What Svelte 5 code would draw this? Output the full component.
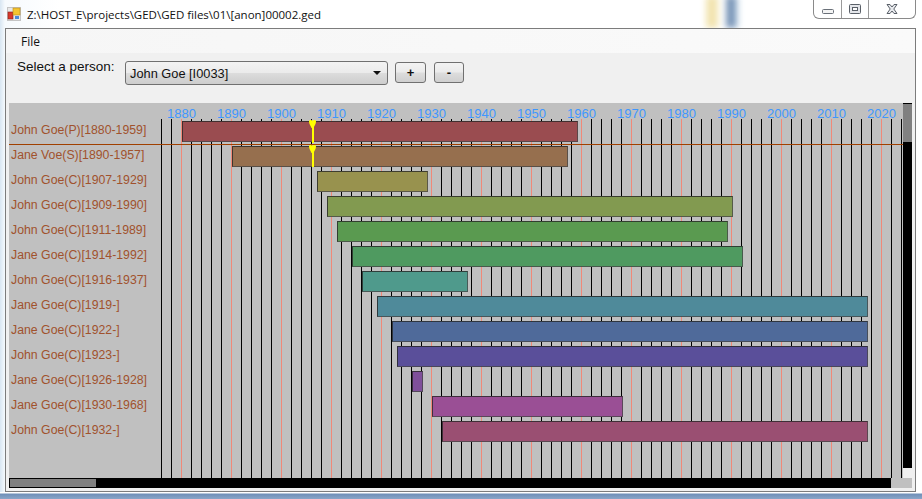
<script lang="ts">
	const people = [
		{ name: 'John Goe(P)', from: 1880, to: 1959, color: '#9a4c50' },
		{ name: 'Jane Voe(S)', from: 1890, to: 1957, color: '#966f4e' },
		{ name: 'John Goe(C)', from: 1907, to: 1929, color: '#98924e' },
		{ name: 'John Goe(C)', from: 1909, to: 1990, color: '#829a50' },
		{ name: 'John Goe(C)', from: 1911, to: 1989, color: '#5a9a50' },
		{ name: 'Jane Goe(C)', from: 1914, to: 1992, color: '#4f9a60' },
		{ name: 'John Goe(C)', from: 1916, to: 1937, color: '#4f9a8c' },
		{ name: 'Jane Goe(C)', from: 1919, to: null, color: '#4f8a9a' },
		{ name: 'Jane Goe(C)', from: 1922, to: null, color: '#4f6a9a' },
		{ name: 'John Goe(C)', from: 1923, to: null, color: '#5a4f9a' },
		{ name: 'Jane Goe(C)', from: 1926, to: 1928, color: '#7f4f9a' },
		{ name: 'Jane Goe(C)', from: 1930, to: 1968, color: '#9a4f95' },
		{ name: 'John Goe(C)', from: 1932, to: null, color: '#9a4f72' }
	];

	/** Scale of the chart: 5px per year, bars are measured from the label column */
	const barLeft = (year: number) => 21 + (year - 1880) * 5;
	const barWidth = (from: number, to: number | null) => ((to ?? 2017) - from) * 5 + 1;

	const ticks = Array.from({ length: 75 }, (_, i) => 1876 + i * 2);
	const decades = ticks.filter((y) => y % 10 === 0);
	const tickX = (year: number) => 152 + (year - 1876) * 5;
</script>

<div class="window">
	<div class="glass"></div>
	<header class="titlebar">
		<svg class="app-icon" width="14" height="14" viewBox="0 0 14 14">
			<rect x="0.5" y="0.5" width="13" height="13" fill="#e8e8e8" stroke="#c4c4c4" />
			<rect x="1" y="5" width="5" height="7" fill="#d8382c" stroke="#8c2018" stroke-width="0.6" />
			<rect x="6" y="1" width="7" height="7" fill="#f4c430" stroke="#b88a18" stroke-width="0.6" />
			<rect x="8" y="9" width="4" height="3" fill="#4a8ad8" />
		</svg>
		<span class="title">Z:\HOST_E\projects\GED\GED files\01\[anon]00002.ged</span>
		<div class="controls">
			<div class="ctl min">
				<svg width="12" height="5" viewBox="0 0 12 5"><rect x="0.5" y="0.5" width="11" height="4" rx="1" fill="#f4f4f4" stroke="#6a7078" /></svg>
			</div>
			<div class="ctl max">
				<svg width="12" height="10" viewBox="0 0 12 10"><rect x="0.5" y="0.5" width="11" height="9" rx="1" fill="#e4e6ea" stroke="#5a6068" /><rect x="3.5" y="3.5" width="5" height="3" fill="#fff" stroke="#5a6068" /></svg>
			</div>
			<div class="ctl close">
				<svg width="12" height="10" viewBox="0 0 12 10"><path d="M1 0.5H4L6 3L8 0.5H11L7.8 5L11 9.5H8L6 7L4 9.5H1L4.2 5Z" fill="#e8eaee" stroke="#5a6068" /></svg>
			</div>
		</div>
	</header>

	<main class="client">
		<nav class="menu"><span>File</span></nav>

		<div class="toolbar">
			<span class="prompt">Select a person:</span>
			<div class="combo">
				<span>John Goe [I0033]</span>
				<i class="arrow"></i>
			</div>
			<button class="btn plus">+</button>
			<button class="btn minus">-</button>
		</div>

		<div class="chart-wrap">
			<div class="chart">
				{#each ticks as year}
					<div class="tick" class:decade={year % 10 === 0} style="left: {tickX(year)}px"></div>
				{/each}
				{#each decades as year}
					<span class="year" style="left: {tickX(year) - 20}px">{year}</span>
				{/each}

				<div class="rows">
					{#each people as p}
						<div class="row">
							<span class="label">{p.name}[{p.from}-{p.to ?? ''}]</span>
							<div
								class="bar"
								style="margin-left: {barLeft(p.from)}px; width: {barWidth(p.from, p.to)}px; background: {p.color}"
							></div>
						</div>
					{/each}
				</div>

				<div class="cursor"></div>
				<div class="marker first">
					<svg width="7" height="8" viewBox="0 0 7 8"><path d="M0 1.500C0 0 2.500 -0.300 3.500 0.700C4.500 -0.300 7 0 7 1.500C7 4 5.500 5.500 4.500 8H2.500C1.500 5.500 0 4 0 1.500Z" fill="#ffff00" /></svg>
				</div>
				<div class="marker second">
					<svg width="7" height="8" viewBox="0 0 7 8"><path d="M0 1.500C0 0 2.500 -0.300 3.500 0.700C4.500 -0.300 7 0 7 1.500C7 4 5.500 5.500 4.500 8H2.500C1.500 5.500 0 4 0 1.500Z" fill="#ffff00" /></svg>
				</div>
			</div>
			<div class="vscroll"><div class="vthumb"></div></div>
		</div>

		<div class="hscroll-row">
			<div class="hscroll"><div class="hthumb"></div></div>
			<div class="corner"></div>
		</div>
	</main>
	<div class="frame-bottom"></div>
</div>

<style>
	:global(body) {
		margin: 0;
		background: #fff;
	}
	.window {
		position: relative;
		width: 922px;
		height: 499px;
		overflow: hidden;
		display: flex;
		flex-direction: column;
		background: linear-gradient(90deg, #d8e6f2 0, #f6fafd 5px, #fff 60px);
		font-family: "Liberation Sans", Arial, sans-serif;
	}
	.glass {
		position: absolute;
		top: -4px;
		left: 706px;
		width: 34px;
		height: 32px;
		background: linear-gradient(90deg, #f2e4b0 0 12px, #fff 12px 20px, #7a96b8 20px 30px, #e6f0f8 30px);
		filter: blur(3px);
	}
	.titlebar {
		position: relative;
		height: 28px;
		display: flex;
		align-items: flex-start;
		padding-left: 7px;
		box-sizing: border-box;
	}
	.app-icon {
		margin-top: 7px;
	}
	.title {
		margin-left: 6px;
		margin-top: 7px;
		font-family: "Open Sans", sans-serif;
		font-size: 11.5px;
		line-height: 16px;
		color: #111;
		white-space: nowrap;
	}
	.controls {
		margin-left: auto;
		margin-right: 6px;
		display: flex;
		height: 18px;
		border: 1px solid #8a8a8a;
		border-top: none;
		border-radius: 0 0 6px 6px;
		background: rgba(255, 255, 255, 0.7);
	}
	.ctl {
		display: flex;
		align-items: center;
		justify-content: center;
		height: 18px;
		box-sizing: border-box;
	}
	.min {
		width: 28px;
		border-right: 1px solid #9a9a9a;
		padding-top: 4px;
	}
	.max {
		width: 27px;
		border-right: 1px solid #9a9a9a;
	}
	.close {
		width: 46px;
	}

	.client {
		position: relative;
		width: 911px;
		height: 464px;
		margin-left: 5px;
		box-sizing: border-box;
		border: 1px solid #7c7c7c;
		background: #f0f0f0;
	}
	.menu {
		height: 24px;
		padding-left: 15px;
		background: linear-gradient(90deg, #f6f6f6, #fafafa);
		display: flex;
		align-items: center;
		font-family: "Open Sans", sans-serif;
		font-size: 12px;
		color: #111;
	}
	.toolbar {
		height: 50px;
		box-sizing: border-box;
		padding: 8px 0 0 11px;
		display: flex;
		align-items: flex-start;
		background: #f0f0f0;
	}
	.prompt {
		width: 108px;
		font-size: 13.500px;
		line-height: 15px;
		margin-top: -2px;
		color: #111;
	}
	.combo {
		width: 263px;
		height: 24px;
		box-sizing: border-box;
		border: 1px solid #707070;
		border-radius: 3px;
		background: linear-gradient(#f3f3f3 0, #ebebeb 48%, #dcdcdc 52%, #cdcdcd 100%);
		padding: 0 4px;
		display: flex;
		align-items: center;
		justify-content: space-between;
		font-size: 12.800px;
		color: #111;
	}
	.arrow {
		width: 0;
		height: 0;
		margin-right: 2px;
		border-left: 4px solid transparent;
		border-right: 4px solid transparent;
		border-top: 4px solid #111;
	}
	.btn {
		height: 21px;
		margin-top: 1px;
		padding: 0;
		box-sizing: border-box;
		border: 1px solid #707070;
		border-radius: 3px;
		background: linear-gradient(#f3f3f3 0, #ebebeb 48%, #dddddd 52%, #cfcfcf 100%);
		font-family: "Liberation Sans", Arial, sans-serif;
		font-size: 13px;
		font-weight: bold;
		color: #111;
	}
	.plus {
		width: 31px;
		margin-left: 7px;
	}
	.minus {
		width: 30px;
		margin-left: 8px;
	}

	.chart-wrap {
		display: flex;
		margin-left: 3px;
		height: 375px;
	}
	.chart {
		position: relative;
		width: 894px;
		height: 375px;
		background: #c0c0c0;
		overflow: hidden;
	}
	.tick {
		position: absolute;
		top: 16px;
		bottom: 0;
		width: 1px;
		background: #000;
	}
	.tick.decade {
		background: #f08878;
	}
	.year {
		position: absolute;
		top: 3px;
		width: 41px;
		text-align: center;
		font-size: 13px;
		line-height: 15px;
		color: #3f97ff;
	}
	.rows {
		position: relative;
		padding-top: 18px;
	}
	.row {
		height: 25px;
		display: flex;
		align-items: flex-start;
	}
	.label {
		flex: none;
		width: 150px;
		padding-left: 2px;
		font-size: 12.300px;
		line-height: 19px;
		color: #a0522d;
		white-space: nowrap;
	}
	.bar {
		flex: none;
		height: 21px;
		box-sizing: border-box;
		border: 1px solid rgba(40, 40, 40, 0.8);
		border-right-color: rgba(70, 70, 70, 0.75);
		border-bottom-color: rgba(70, 70, 70, 0.75);
	}
	.cursor {
		position: absolute;
		left: 0;
		right: 0;
		top: 41px;
		height: 1px;
		background: #a04000;
	}
	.marker {
		position: absolute;
		left: 300px;
		width: 7px;
		display: flex;
		justify-content: center;
	}
	.marker svg {
		display: block;
	}
	.marker::after {
		content: "";
		position: absolute;
		left: 3px;
		top: 6px;
		bottom: 0;
		width: 2px;
		background: #ffff00;
	}
	.first {
		top: 17px;
		height: 23px;
	}
	.second {
		top: 42px;
		height: 22px;
	}
	.vscroll {
		width: 9px;
		height: 365px;
		background: #000;
		box-sizing: border-box;
		border-top: 1px solid #000;
	}
	.vthumb {
		height: 38px;
		background: #808080;
	}
	.hscroll-row {
		display: flex;
		margin-left: 3px;
		height: 10px;
	}
	.hscroll {
		width: 882px;
		background: #000;
		padding: 1px;
		box-sizing: border-box;
	}
	.hthumb {
		width: 86px;
		height: 8px;
		background: #808080;
	}
	.corner {
		width: 21px;
		background: #c0c0c0;
	}
	.frame-bottom {
		height: 7px;
		background: linear-gradient(#ffffff 0 1px, #6f8fb8 2px, #8aa6c8 100%);
	}
</style>
